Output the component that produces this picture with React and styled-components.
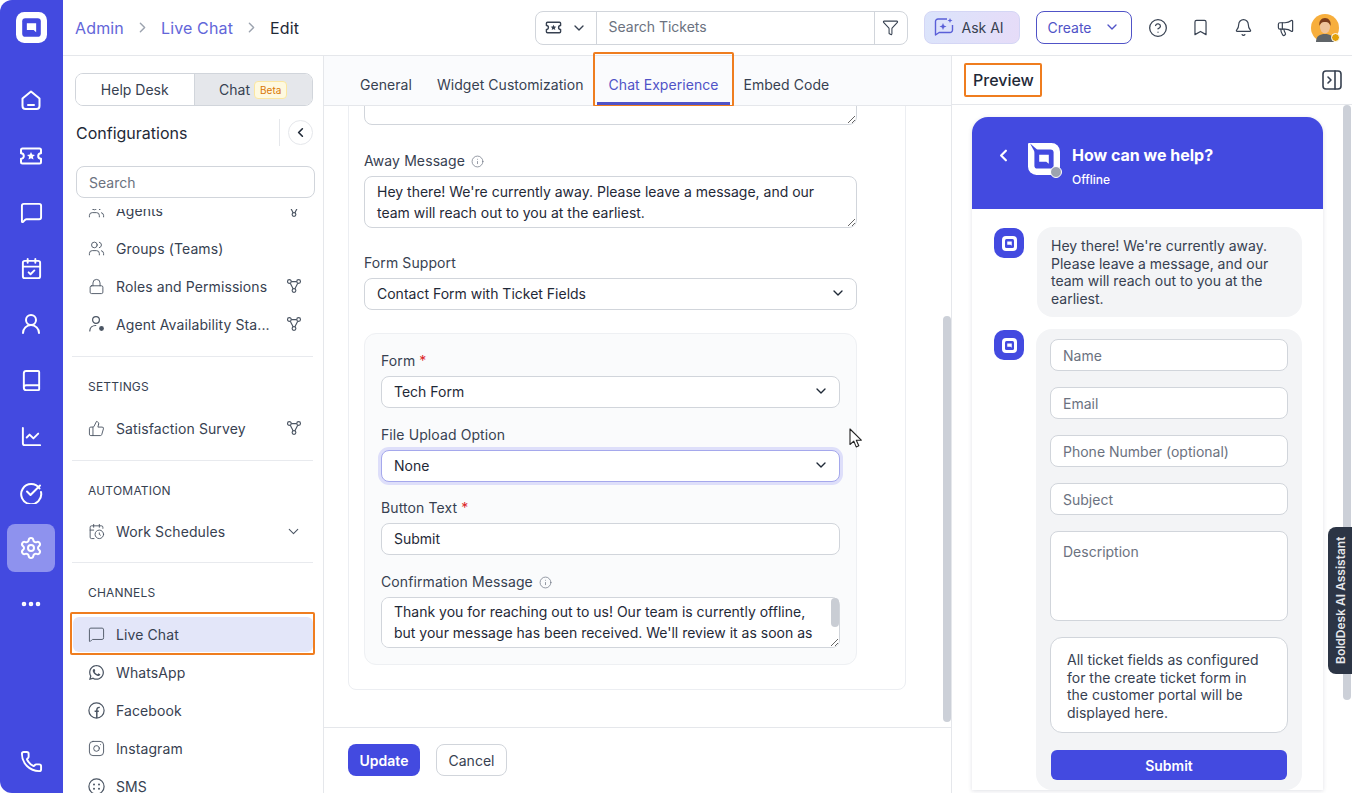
import React from 'react'
import styled, { createGlobalStyle } from 'styled-components'
import {
  Bell, Book, Bookmark, CalendarCheck, CalendarClock, ChartLine, ChevronDown, ChevronLeft, ChevronRight,
  CircleHelp, Ellipsis, Funnel, Info, Instagram, Lock, Megaphone, MessageSquare, Phone, Settings,
  ThumbsUp, UserRound, Users,
} from 'lucide-react'
import { FaWhatsapp } from 'react-icons/fa'

const BLUE = '#434ae0'

const GlobalStyle = createGlobalStyle`
  * { box-sizing: border-box; }
  html, body { margin: 0; padding: 0; height: 100%; background: #fff; }
  body { font-family: Inter, "Liberation Sans", sans-serif; color: #374151; overflow: hidden; }
`

const Logo = ({ size = 32, notch }) => (
  <svg width={size} height={size} viewBox="1 1 30 30">
    {notch ? (
      <path d="M2 1h21a8 8 0 0 1 8 8v14a8 8 0 0 1-8 8H9a8 8 0 0 1-8-8V2a1 1 0 0 1 1-1z" fill="#fff" />
    ) : (
      <rect x="1" y="1" width="30" height="30" rx="8" fill="#fff" />
    )}
    <rect x="7" y="7" width="18" height="18" rx="3" fill={BLUE} />
    {notch && <path d="M3 1.500 10 7.500 7.500 10z" fill={BLUE} />}
    <path d="M11.5 12h9v8.500l-2.400-2h-6.600z" fill="#fff" />
  </svg>
)

const HomeIcon = () => (
  <svg width="22" height="22" viewBox="0 0 22 22" fill="none" stroke="#fff" strokeWidth="2" strokeLinecap="round" strokeLinejoin="round">
    <path d="M2.500 9.500 11 2.500l8.500 7V17a3 3 0 0 1-3 3h-11a3 3 0 0 1-3-3z" />
    <path d="M8 16h6" />
  </svg>
)

const TicketIcon = ({ size = 24, color = '#fff' }) => (
  <svg width={size} height={size} viewBox="0 0 24 24" fill="none" stroke={color} strokeWidth="2" strokeLinejoin="round">
    <path d="M2 6a1.500 1.500 0 0 1 1.500-1.500h17A1.500 1.500 0 0 1 22 6v3.200a2.800 2.800 0 0 0 0 5.600V18a1.500 1.500 0 0 1-1.500 1.500h-17A1.500 1.500 0 0 1 2 18v-3.200a2.800 2.800 0 0 0 0-5.600z" />
    <path d="m12 8 1.200 2.600 2.800.3-2.100 1.900.6 2.800-2.500-1.400-2.500 1.400.6-2.800L8 10.900l2.800-.3z" fill={color} stroke="none" />
  </svg>
)

const CheckRingIcon = () => (
  <svg width="24" height="24" viewBox="0 0 24 24" fill="none" stroke="#fff" strokeWidth="2" strokeLinecap="round" strokeLinejoin="round">
    <path d="M20.500 8.500A10 10 0 1 0 22 12" />
    <path d="m8 11.500 3.500 3.500L21 5.500" />
  </svg>
)

const NodesIcon = () => (
  <svg width="16" height="16" viewBox="0 0 18 18" fill="none" stroke="#4b5563" strokeWidth="1.300">
    <circle cx="3.800" cy="4" r="2.100" />
    <circle cx="14.200" cy="4" r="2.100" />
    <circle cx="9" cy="14" r="2.100" />
    <path d="M5.900 4h6.200M4.800 5.900 8 12M13.200 5.900 10 12" />
  </svg>
)

const FacebookRound = () => (
  <svg width="17" height="17" viewBox="0 0 17 17" fill="none" stroke="#4b5563" strokeWidth="1.200">
    <circle cx="8.500" cy="8.500" r="7.600" />
    <path d="M8.800 16V8.200c0-2 .8-3 3-2.800M6.600 9.200h4.200" strokeWidth="1.500" />
  </svg>
)

const SmsIcon = () => (
  <svg width="17" height="17" viewBox="0 0 17 17" fill="#4b5563" stroke="#4b5563">
    <circle cx="8.500" cy="8.500" r="7.600" fill="none" strokeWidth="1.200" />
    <circle cx="6" cy="6.500" r="1" stroke="none" />
    <circle cx="11" cy="6.500" r="1" stroke="none" />
    <circle cx="6" cy="10.800" r="1" stroke="none" />
    <circle cx="11" cy="10.800" r="1" stroke="none" />
  </svg>
)

const AgentStatusIcon = () => (
  <svg width="18" height="18" viewBox="0 0 18 18" fill="none" stroke="#4b5563" strokeWidth="1.200" strokeLinecap="round">
    <circle cx="8" cy="5" r="3.400" />
    <path d="M1.800 16c0-3.400 2.600-5.500 6-5.500" />
    <circle cx="13.500" cy="13.500" r="2.400" fill="#4b5563" stroke="none" />
  </svg>
)

const SparkChatIcon = () => (
  <svg width="20" height="20" viewBox="0 0 20 20" fill="none" stroke="#5a5fd8" strokeWidth="1.400" strokeLinejoin="round">
    <path d="M13 2H4a2.500 2.500 0 0 0-2.500 2.500V18l3.600-2.500H16a2.500 2.500 0 0 0 2.500-2.500V8" />
    <path d="m9 6 1 2.600L12.500 9.500 10 10.500 9 13l-1-2.500-2.500-1 2.500-.9zM16 1l.7 1.800 1.800.7-1.800.7L16 6l-.7-1.800-1.800-.7 1.800-.7z" fill="#5a5fd8" stroke="none" />
  </svg>
)

const AvatarArt = () => (
  <svg width="28" height="28" viewBox="0 0 28 28">
    <circle cx="14" cy="14" r="14" fill="#f7ae3c" />
    <path d="M5 28c0-6 4-8 9-8s9 2 9 8z" fill="#5f6468" />
    <ellipse cx="14" cy="13" rx="5" ry="6.500" fill="#efc39a" />
    <path d="M8.500 12c-1-5 2-8 5.500-8s6.500 3 5.500 8c-1-2.500-2-4-5.500-4s-4.500 1.500-5.500 4z" fill="#7c3d1c" />
  </svg>
)

const CursorArrow = () => (
  <svg width="14" height="20" viewBox="0 0 14 20" fill="#fff" stroke="#222" strokeWidth="1.100" strokeLinejoin="round">
    <path d="M1 1v15.500l3.800-3.400 2.400 5.800 2.600-1.100-2.500-5.600h5z" />
  </svg>
)

const App = () => (
  <>
    <GlobalStyle />
    <Shell>
      <Rail>
        <RailLogo><Logo size={31} /></RailLogo>
        <RailItem><HomeIcon /></RailItem>
        <RailItem><TicketIcon /></RailItem>
        <RailItem><MessageSquare size={23} strokeWidth={2} /></RailItem>
        <RailItem><CalendarCheck size={23} strokeWidth={2} /></RailItem>
        <RailItem><UserRound size={24} strokeWidth={2} /></RailItem>
        <RailItem><Book size={23} strokeWidth={2} /></RailItem>
        <RailItem><ChartLine size={23} strokeWidth={2} /></RailItem>
        <RailItem><CheckRingIcon /></RailItem>
        <RailItem $active><Settings size={24} strokeWidth={2} /></RailItem>
        <RailItem><Ellipsis size={24} strokeWidth={2.6} /></RailItem>
        <RailBottom><Phone size={23} strokeWidth={2} /></RailBottom>
      </Rail>

      <Column>
        <Header>
          <Crumbs>
            <Crumb>Admin</Crumb>
            <ChevronRight size={17} color="#9ca3af" />
            <Crumb>Live Chat</Crumb>
            <ChevronRight size={17} color="#9ca3af" />
            <Crumb $current>Edit</Crumb>
          </Crumbs>
          <SearchGroup>
            <SearchType>
              <TicketIcon size={17} color="#374151" />
              <ChevronDown size={16} color="#374151" />
            </SearchType>
            <SearchField>Search Tickets</SearchField>
            <SearchFilter><Funnel size={17} strokeWidth={1.5} color="#374151" /></SearchFilter>
          </SearchGroup>
          <AskAi><SparkChatIcon />Ask AI</AskAi>
          <CreateButton>Create<ChevronDown size={16} /></CreateButton>
          <HeaderIcons>
            <CircleHelp size={20} strokeWidth={1.5} />
            <Bookmark size={19} strokeWidth={1.5} />
            <Bell size={19} strokeWidth={1.5} />
            <Megaphone size={19} strokeWidth={1.5} />
          </HeaderIcons>
          <Avatar>
            <AvatarArt />
            <AvatarDot />
          </Avatar>
        </Header>

        <Body>
          <Sidebar>
            <Toggle>
              <ToggleItem>Help Desk</ToggleItem>
              <ToggleItem $active>Chat<BetaTag>Beta</BetaTag></ToggleItem>
            </Toggle>
            <ConfigHead>
              <ConfigTitle>Configurations</ConfigTitle>
              <ConfigDivider />
              <CollapseButton><ChevronLeft size={15} strokeWidth={2.6} /></CollapseButton>
            </ConfigHead>
            <SideSearch>Search</SideSearch>
            <SideList>
              <SideScroll>
                <SideRow icon={<Users size={17} strokeWidth={1.3} />} label="Agents" nodes />
                <SideRow icon={<Users size={17} strokeWidth={1.3} />} label="Groups (Teams)" />
                <SideRow icon={<Lock size={17} strokeWidth={1.3} />} label="Roles and Permissions" nodes />
                <SideRow icon={<AgentStatusIcon />} label="Agent Availability Sta..." nodes />
                <SideDivider $gap={13} />
                <SideHeading $gap={11}>SETTINGS</SideHeading>
                <SideRow icon={<ThumbsUp size={17} strokeWidth={1.3} />} label="Satisfaction Survey" nodes />
                <SideDivider $gap={13} />
                <SideHeading $gap={10}>AUTOMATION</SideHeading>
                <SideRow icon={<CalendarClock size={17} strokeWidth={1.3} />} label="Work Schedules" chevron />
                <SideDivider $gap={12} />
                <SideHeading $gap={12}>CHANNELS</SideHeading>
                <SideRow icon={<MessageSquare size={17} strokeWidth={1.3} />} label="Live Chat" active />
                <SideRow icon={<FaWhatsapp size={17} />} label="WhatsApp" />
                <SideRow icon={<FacebookRound />} label="Facebook" />
                <SideRow icon={<Instagram size={17} strokeWidth={1.3} />} label="Instagram" />
                <SideRow icon={<SmsIcon />} label="SMS" />
              </SideScroll>
            </SideList>
          </Sidebar>

          <Main>
            <Tabs>
              <Tab>General</Tab>
              <Tab>Widget Customization</Tab>
              <Tab $active>Chat Experience</Tab>
              <Tab>Embed Code</Tab>
            </Tabs>
            <ScrollArea>
              <FormPanel>
                <TextBox $height={51} $marginBottom={27} readOnly defaultValue="" />
                <Label>Away Message<Info size={13} strokeWidth={1.3} color="#6b7280" /></Label>
                <TextBox
                  $height={52}
                  $marginBottom={26}
                  readOnly
                  defaultValue="Hey there! We're currently away. Please leave a message, and our team will reach out to you at the earliest."
                />
                <Label>Form Support</Label>
                <Select $marginBottom={23}>Contact Form with Ticket Fields<ChevronDown size={16} /></Select>
                <InnerCard>
                  <Label>Form<Required>*</Required></Label>
                  <Select $marginBottom={18}>Tech Form<ChevronDown size={16} /></Select>
                  <Label>File Upload Option</Label>
                  <Select $focused $marginBottom={17}>None<ChevronDown size={16} /></Select>
                  <Label>Button Text<Required>*</Required></Label>
                  <Select $marginBottom={18}>Submit</Select>
                  <Label>Confirmation Message<Info size={13} strokeWidth={1.3} color="#6b7280" /></Label>
                  <ConfirmWrap>
                    <ConfirmBox
                      readOnly
                      defaultValue="Thank you for reaching out to us! Our team is currently offline, but your message has been received. We'll review it as soon as possible and get back to you shortly. Thank you for your patience."
                    />
                    <ConfirmThumb />
                  </ConfirmWrap>
                </InnerCard>
              </FormPanel>
              <MainThumb />
              <Pointer><CursorArrow /></Pointer>
            </ScrollArea>
            <Footer>
              <UpdateButton>Update</UpdateButton>
              <CancelButton>Cancel</CancelButton>
            </Footer>
          </Main>

          <Preview>
            <PreviewHead>
              <PreviewTitle>Preview</PreviewTitle>
              <PanelToggle>
                <svg width="20" height="20" viewBox="0 0 20 20" fill="none" stroke="#374151" strokeWidth="1.600" strokeLinecap="round" strokeLinejoin="round">
                  <rect x="1" y="1" width="18" height="18" rx="3" />
                  <path d="M13 1v18M6 7l3 3-3 3" />
                </svg>
              </PanelToggle>
            </PreviewHead>
            <PreviewBody>
              <Widget>
                <WidgetHead>
                  <BackIcon><ChevronLeft size={19} strokeWidth={2.8} color="#fff" /></BackIcon>
                  <WidgetLogo>
                    <Logo size={32} notch />
                    <OfflineDot />
                  </WidgetLogo>
                  <WidgetText>
                    <WidgetTitle>How can we help?</WidgetTitle>
                    <WidgetStatus>Offline</WidgetStatus>
                  </WidgetText>
                </WidgetHead>
                <Messages>
                  <MessageRow>
                    <BotAvatar><Logo size={15} /></BotAvatar>
                    <Bubble>Hey there! We're currently away. Please leave a message, and our team will reach out to you at the earliest.</Bubble>
                  </MessageRow>
                  <MessageRow>
                    <BotAvatar><Logo size={15} /></BotAvatar>
                    <FormBubble>
                      <FakeInput>Name</FakeInput>
                      <FakeInput>Email</FakeInput>
                      <FakeInput>Phone Number (optional)</FakeInput>
                      <FakeInput>Subject</FakeInput>
                      <FakeInput $tall>Description</FakeInput>
                      <NoteBox>All ticket fields as configured for the create ticket form in the customer portal will be displayed here.</NoteBox>
                      <SubmitButton>Submit</SubmitButton>
                    </FormBubble>
                  </MessageRow>
                </Messages>
              </Widget>
              <PreviewThumb />
              <AssistantTab>BoldDesk AI Assistant</AssistantTab>
            </PreviewBody>
          </Preview>
        </Body>
      </Column>
    </Shell>
  </>
)

const SideRow = ({ icon, label, nodes, chevron, active }) => (
  <Row $active={active}>
    <RowIcon>{icon}</RowIcon>
    <RowLabel>{label}</RowLabel>
    {nodes && <RowEnd><NodesIcon /></RowEnd>}
    {chevron && <RowEnd><ChevronDown size={17} strokeWidth={1.5} /></RowEnd>}
  </Row>
)

export default App

const Shell = styled.div`
  display: flex;
  height: 793px;
  overflow: hidden;
`

const Rail = styled.nav`
  width: 63px;
  flex: none;
  background: ${BLUE};
  border-radius: 12px 0 0 12px;
  display: flex;
  flex-direction: column;
  align-items: center;
  padding: 12px 1px 0 0;
  color: #fff;
`

const RailLogo = styled.div`
  height: 32px;
  margin-bottom: 32px;
`

const RailItem = styled.div`
  width: 48px;
  height: 48px;
  flex: none;
  margin-bottom: 8px;
  border-radius: 8px;
  display: flex;
  align-items: center;
  justify-content: center;
  background: ${p => (p.$active ? '#8e92ee' : 'transparent')};
`

const RailBottom = styled(RailItem)`
  margin: auto 0 8px;
`

const Column = styled.div`
  flex: 1;
  min-width: 0;
  display: flex;
  flex-direction: column;
`

const Header = styled.header`
  height: 56px;
  flex: none;
  border-bottom: 1px solid #e5e7eb;
  display: flex;
  align-items: center;
  padding: 0 13px 0 12px;
`

const Crumbs = styled.div`
  display: flex;
  align-items: center;
  gap: 10px;
`

const Crumb = styled.span`
  font-size: 16px;
  letter-spacing: 0.15px;
  color: ${p => (p.$current ? '#1f2937' : '#6366d9')};
`

const SearchGroup = styled.div`
  margin-left: auto;
  width: 373px;
  height: 34px;
  border: 1px solid #d1d5db;
  border-radius: 8px;
  display: flex;
  align-items: stretch;
  font-size: 14px;
`

const SearchType = styled.div`
  width: 61px;
  border-right: 1px solid #d1d5db;
  display: flex;
  align-items: center;
  justify-content: center;
  gap: 9px;
`

const SearchField = styled.div`
  flex: 1;
  display: flex;
  align-items: center;
  padding: 0 0 2px 12px;
  color: #6b7280;
`

const SearchFilter = styled.div`
  width: 33px;
  border-left: 1px solid #d1d5db;
  display: flex;
  align-items: center;
  justify-content: center;
`

const AskAi = styled.button`
  width: 96px;
  height: 33px;
  margin-left: 16px;
  border: 1px solid #d4d6f5;
  border-radius: 8px;
  background: linear-gradient(100deg, #dbe4fb, #e6dcf8);
  display: flex;
  align-items: center;
  gap: 8px;
  padding: 0 0 1px 9px;
  font: 14px Inter, sans-serif;
  color: #374151;
`

const CreateButton = styled.button`
  width: 96px;
  height: 33px;
  margin-left: 16px;
  padding: 0 0 1px;
  border: 1px solid #5053c7;
  border-radius: 8px;
  background: #fff;
  color: #5053c7;
  display: flex;
  align-items: center;
  justify-content: center;
  gap: 12px;
  font: 14px Inter, sans-serif;
`

const HeaderIcons = styled.div`
  display: flex;
  align-items: center;
  gap: 23.500px;
  margin-left: 16px;
  color: #374151;
`

const Avatar = styled.div`
  position: relative;
  width: 28px;
  height: 28px;
  margin-left: 16px;
`

const AvatarDot = styled.span`
  position: absolute;
  right: -1px;
  bottom: 0;
  width: 9px;
  height: 9px;
  border-radius: 50%;
  background: #e3a008;
  border: 1px solid #fff;
`

const Body = styled.div`
  flex: 1;
  min-height: 0;
  display: flex;
`

const Sidebar = styled.aside`
  width: 261px;
  flex: none;
  border-right: 1px solid #e5e7eb;
  padding: 17px 0 0 12px;
  display: flex;
  flex-direction: column;
  overflow: hidden;
`

const Toggle = styled.div`
  width: 238px;
  height: 33px;
  flex: none;
  border: 1px solid #d1d5db;
  border-radius: 8px;
  display: flex;
  overflow: hidden;
  font-size: 14px;
  color: #374151;
`

const ToggleItem = styled.div`
  flex: 1;
  display: flex;
  align-items: center;
  justify-content: center;
  gap: 4px;
  background: ${p => (p.$active ? '#e5e7eb' : '#fff')};
  border-left: ${p => (p.$active ? '1px solid #d1d5db' : 'none')};
`

const BetaTag = styled.span`
  font-size: 10px;
  line-height: 16px;
  padding: 0 5px;
  color: #d97706;
  background: #fef9e0;
  border: 1px solid #fbe6a0;
  border-radius: 4px;
`

const ConfigHead = styled.div`
  display: flex;
  align-items: center;
  height: 27px;
  width: 237px;
  margin: 13px 0 0 1px;
  flex: none;
`

const ConfigTitle = styled.div`
  flex: 1;
  font-size: 16px;
  color: #1f2937;
`

const ConfigDivider = styled.div`
  width: 1px;
  height: 27px;
  background: #e5e7eb;
  margin-right: 8px;
`

const CollapseButton = styled.div`
  width: 25px;
  height: 25px;
  border: 1px solid #e5e7eb;
  border-radius: 50%;
  display: flex;
  align-items: center;
  justify-content: center;
  color: #1f2937;
`

const SideSearch = styled.div`
  width: 239px;
  height: 32px;
  flex: none;
  margin: 20px 0 11px 1px;
  border: 1px solid #d1d5db;
  border-radius: 8px;
  padding-left: 12px;
  display: flex;
  align-items: center;
  font-size: 14px;
  color: #6b7280;
`

const SideList = styled.div`
  flex: 1;
  min-height: 0;
  overflow: hidden;
  margin-left: -8px;
`

const SideScroll = styled.div`
  margin-top: -18px;
  padding: 0 10px 0 6px;
  display: flex;
  flex-direction: column;
`

const Row = styled.div`
  position: relative;
  height: ${p => (p.$active ? 35 : 38)}px;
  margin: ${p => (p.$active ? '1px 0' : 0)};
  flex: none;
  display: flex;
  align-items: center;
  padding: 0 11px 0 15px;
  border-radius: 6px;
  background: ${p => (p.$active ? '#e3e6f9' : 'transparent')};
  color: #4b5563;

  &::after {
    content: ${p => (p.$active ? '""' : 'none')};
    position: absolute;
    inset: -5px -2px -3px -3px;
    border: 2px solid #ef7d1f;
    border-radius: 2px;
  }
`

const RowIcon = styled.span`
  width: 28px;
  flex: none;
  display: flex;
  align-items: center;
`

const RowLabel = styled.span`
  font-size: 14px;
  letter-spacing: 0.1px;
  color: #374151;
  white-space: nowrap;
`

const RowEnd = styled.span`
  margin-left: auto;
  display: flex;
  align-items: center;
`

const SideDivider = styled.div`
  height: 1px;
  flex: none;
  margin: ${p => p.$gap}px 0 0 -1px;
  background: #e8eaee;
`

const SideHeading = styled.div`
  height: 41px;
  flex: none;
  padding: 22px 0 0 15px;
  margin-bottom: ${p => p.$gap}px;
  font-size: 12px;
  line-height: 15px;
  letter-spacing: 0.2px;
  color: #374151;
`

const Main = styled.main`
  width: 628px;
  flex: none;
  border-right: 1px solid #e5e7eb;
  display: flex;
  flex-direction: column;
  min-height: 0;
`

const Tabs = styled.div`
  height: 50px;
  flex: none;
  display: flex;
  gap: 1px;
  padding-left: 24px;
  background: #fafbfd;
  border-bottom: 1px solid #e5e7eb;
`

const Tab = styled.div`
  position: relative;
  padding: 10px 12px 0;
  display: flex;
  align-items: center;
  font-size: 14px;
  letter-spacing: 0.05px;
  white-space: nowrap;
  color: ${p => (p.$active ? '#5053c7' : '#374151')};
  border-bottom: 3px solid ${p => (p.$active ? '#5053c7' : 'transparent')};

  &::after {
    content: ${p => (p.$active ? '""' : 'none')};
    position: absolute;
    inset: -4px -4px -5px -4px;
    border: 2px solid #ef7d1f;
    border-radius: 2px;
  }
`

const ScrollArea = styled.div`
  position: relative;
  flex: 1;
  min-height: 0;
  overflow: hidden;
`

const FormPanel = styled.div`
  width: 558px;
  margin: -33px 0 0 24px;
  padding: 0 48px 24px 15px;
  border: 1px solid #eceef2;
  border-radius: 8px;
`

const Label = styled.div`
  display: flex;
  align-items: center;
  gap: 6px;
  height: 18px;
  margin-bottom: 6px;
  font-size: 14px;
  line-height: 18px;
  letter-spacing: 0.1px;
  color: #374151;
`

const Required = styled.span`
  color: #dc2626;
  margin-left: -2px;
  align-self: flex-start;
`

const TextBox = styled.textarea`
  display: block;
  width: 100%;
  height: ${p => p.$height}px;
  margin-bottom: ${p => p.$marginBottom}px;
  padding: 4px 12px;
  border: 1px solid #d1d5db;
  border-radius: 8px;
  background: #fff;
  font: 14px/21px Inter, sans-serif;
  color: #1f2937;
  outline: none;
`

const ConfirmWrap = styled.div`
  position: relative;
`

const ConfirmBox = styled(TextBox)`
  height: 51px;
  margin: 0;
  padding-top: 3px;
`

const ConfirmThumb = styled.span`
  position: absolute;
  top: 1px;
  right: 1px;
  width: 8px;
  height: 29px;
  border-radius: 4px;
  background: #c9cdd4;
`

const Select = styled.div`
  height: 32px;
  margin-bottom: ${p => p.$marginBottom}px;
  padding: 0 10px 2px 12px;
  display: flex;
  align-items: center;
  justify-content: space-between;
  background: #fff;
  border: 1px solid ${p => (p.$focused ? '#a5a8ec' : '#d1d5db')};
  border-radius: 8px;
  box-shadow: ${p => (p.$focused ? '0 0 0 3px #dedffa' : 'none')};
  font-size: 14px;
  color: #1f2937;
`

const InnerCard = styled.div`
  padding: 18px 16px 16px;
  border: 1px solid #eef0f3;
  border-radius: 12px;
  background: #fafbfc;
`

const MainThumb = styled.div`
  position: absolute;
  top: 210px;
  left: 619px;
  width: 8px;
  height: 406px;
  border-radius: 4px;
  background: #ccd0d8;
`

const Pointer = styled.div`
  position: absolute;
  top: 322px;
  left: 525px;
  line-height: 0;
`

const Footer = styled.footer`
  height: 66px;
  flex: none;
  border-top: 1px solid #e5e7eb;
  display: flex;
  align-items: center;
  gap: 16px;
  padding: 0 0 2px 24px;
`

const UpdateButton = styled.button`
  width: 72px;
  height: 32px;
  padding: 1px 0 0;
  border: none;
  border-radius: 8px;
  background: ${BLUE};
  color: #fff;
  font: 600 14px Inter, sans-serif;
`

const CancelButton = styled.button`
  width: 71px;
  height: 32px;
  padding: 1px 0 0;
  border: 1px solid #d1d5db;
  border-radius: 8px;
  background: #fff;
  color: #374151;
  font: 14px Inter, sans-serif;
`

const Preview = styled.section`
  flex: 1;
  min-width: 0;
  display: flex;
  flex-direction: column;
`

const PreviewHead = styled.div`
  height: 49px;
  flex: none;
  border-bottom: 1px solid #e5e7eb;
  display: flex;
  align-items: center;
  justify-content: space-between;
  padding: 0 10px 0 21px;
`

const PreviewTitle = styled.div`
  position: relative;
  font-size: 16px;
  font-weight: 500;
  color: #1f2937;

  &::after {
    content: "";
    position: absolute;
    inset: -7px -8px -7px -9px;
    border: 2px solid #ef7d1f;
    border-radius: 2px;
  }
`

const PanelToggle = styled.div`
  line-height: 0;
`

const PreviewBody = styled.div`
  position: relative;
  flex: 1;
  min-height: 0;
  overflow: hidden;
  padding: 12px 0 0 20px;
`

const PreviewThumb = styled.div`
  position: absolute;
  top: 0;
  right: 1px;
  width: 8px;
  height: 595px;
  border-radius: 4px;
  background: #ccd0d8;
`

const AssistantTab = styled.div`
  position: absolute;
  top: 422px;
  right: 0;
  width: 24px;
  height: 147px;
  background: #2c3545;
  color: #e5e7eb;
  font-size: 12px;
  font-weight: 600;
  writing-mode: vertical-rl;
  transform: rotate(180deg);
  display: flex;
  align-items: center;
  justify-content: center;
  border-radius: 0 8px 8px 0;
`

const Widget = styled.div`
  width: 351px;
  border-radius: 16px 16px 0 0;
  box-shadow: 0 1px 4px rgba(60, 70, 100, 0.16);
  background: #fff;
`

const WidgetHead = styled.div`
  height: 92px;
  background: ${BLUE};
  border-radius: 16px 16px 0 0;
  display: flex;
  align-items: flex-start;
  gap: 12px;
  padding: 26px 0 0 22px;
  color: #fff;
`

const BackIcon = styled.span`
  margin: 3px 3px 0 0;
  line-height: 0;
`

const WidgetLogo = styled.div`
  position: relative;
  width: 32px;
  height: 32px;
  line-height: 0;
`

const OfflineDot = styled.span`
  position: absolute;
  right: -2px;
  bottom: -3px;
  width: 12px;
  height: 12px;
  border-radius: 50%;
  background: #9ca3af;
  border: 1px solid #fff;
`

const WidgetText = styled.div`
  margin-top: 1px;
`

const WidgetTitle = styled.div`
  font-size: 16px;
  font-weight: 700;
  line-height: 22px;
`

const WidgetStatus = styled.div`
  font-size: 12px;
  font-weight: 500;
  line-height: 16px;
  margin-top: 6px;
`

const Messages = styled.div`
  padding: 18px 21px 0 22px;
  display: flex;
  flex-direction: column;
  gap: 12px;
`

const MessageRow = styled.div`
  display: flex;
  align-items: flex-start;
  gap: 13px;
`

const BotAvatar = styled.div`
  width: 30px;
  height: 30px;
  flex: none;
  margin-top: 1px;
  border-radius: 10px;
  background: ${BLUE};
  display: flex;
  align-items: center;
  justify-content: center;
`

const Bubble = styled.div`
  flex: 1;
  padding: 10px 14px;
  border-radius: 16px;
  background: #f3f4f6;
  font-size: 14px;
  line-height: 17.5px;
  color: #374151;
`

const FormBubble = styled.div`
  flex: 1;
  margin-left: -1px;
  padding: 10px 14px;
  border-radius: 16px;
  background: #f3f4f6;
  display: flex;
  flex-direction: column;
  gap: 16px;
`

const FakeInput = styled.div`
  height: ${p => (p.$tall ? 90 : 32)}px;
  padding: ${p => (p.$tall ? '11px' : '0')} 12px 0;
  display: flex;
  align-items: ${p => (p.$tall ? 'flex-start' : 'center')};
  background: #fff;
  border: 1px solid #d1d5db;
  border-radius: 8px;
  font-size: 14px;
  color: #6b7280;
`

const NoteBox = styled.div`
  height: 96px;
  padding: 13px 16px;
  background: #fff;
  border: 1px solid #d1d5db;
  border-radius: 12px;
  font-size: 14px;
  line-height: 17.5px;
  color: #374151;
`

const SubmitButton = styled.button`
  height: 30px;
  margin: 1px 1px 0;
  border: none;
  border-radius: 6px;
  background: ${BLUE};
  color: #fff;
  font: 600 14px Inter, sans-serif;
`
